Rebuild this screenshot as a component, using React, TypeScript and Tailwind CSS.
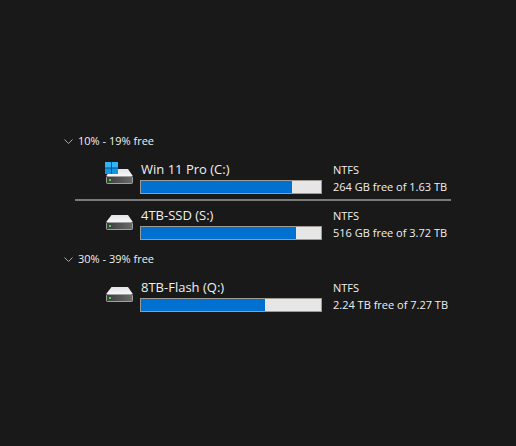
import React, { useState } from 'react';

interface Drive {
    name: string;
    system: string;
    space: string;
    used: number;
    isWindows?: boolean;
}

const groups: { title: string; drives: Drive[] }[] = [
    {
        title: '10% - 19% free',
        drives: [
            { name: 'Win 11 Pro (C:)', system: 'NTFS', space: '264 GB free of 1.63 TB', used: 84, isWindows: true },
            { name: '4TB-SSD (S:)', system: 'NTFS', space: '516 GB free of 3.72 TB', used: 86 },
        ],
    },
    {
        title: '30% - 39% free',
        drives: [
            { name: '8TB-Flash (Q:)', system: 'NTFS', space: '2.24 TB free of 7.27 TB', used: 69 },
        ],
    },
];

const DriveIcon: React.FC<{ isWindows?: boolean }> = ({ isWindows }) => (
    <svg className="h-6 w-7 shrink-0" viewBox="0 0 28 24" aria-hidden="true">
        <defs>
            <linearGradient id="drive-top" x1="0" y1="0" x2="0" y2="1">
                <stop offset="0" stopColor="#e4e4e8" />
                <stop offset="1" stopColor="#f6f6f8" />
            </linearGradient>
            <linearGradient id="drive-front" x1="0" y1="0" x2="1" y2="0">
                <stop offset="0" stopColor="#3c3c3c" />
                <stop offset="1" stopColor="#6b6b6b" />
            </linearGradient>
        </defs>
        <path d="M6.5 9h16.5l4.8 7h-26.6z" fill="url(#drive-top)" />
        <rect x="1.5" y="16.5" width="26" height="7" rx="0.8" fill="url(#drive-front)" stroke="#a0a0a0" />
        <rect x="4" y="19" width="2" height="2" fill="#3ddc3d" />
        {isWindows && (
            <g>
                <rect x="0" y="2" width="13" height="12" fill="#0b4f80" />
                <path d="M0 2h6v5.5h-6zM7 2h6v5.5h-6z" fill="#2fb4f5" />
                <path d="M0 8.5h6v5.5h-6zM7 8.5h6v5.5h-6z" fill="#1496e6" />
            </g>
        )}
    </svg>
);

const DriveRow: React.FC<{ drive: Drive }> = ({ drive }) => (
    <li className="flex pl-[41px]">
        <div className="mr-[7px] flex items-start pt-px">
            <DriveIcon isWindows={drive.isWindows} />
        </div>
        <div className="mr-[11px] min-w-0 flex-1">
            <h3 className="mb-px truncate pl-px text-[13px] leading-5">{drive.name}</h3>
            <div
                className="h-[14px] border border-[#a09a94] bg-[#e6e6e6]"
                role="meter"
                aria-label={drive.name}
                aria-valuemin={0}
                aria-valuemax={100}
                aria-valuenow={drive.used}
            >
                <div className="h-full bg-[#0070d1]" style={{ width: `${drive.used}%` }} />
            </div>
        </div>
        <div className="w-[119px] shrink-0 pt-[2px] pb-px text-[11px] leading-[17px] whitespace-nowrap">
            <p>{drive.system}</p>
            <p>{drive.space}</p>
        </div>
    </li>
);

const DriveGroup: React.FC<{ title: string; drives: Drive[] }> = ({ title, drives }) => {
    const [isOpen, setIsOpen] = useState(true);
    return (
        <section>
            <h2>
                <button
                    type="button"
                    className="flex items-center gap-[5px] text-[11px] leading-[18px]"
                    onClick={() => setIsOpen(!isOpen)}
                    aria-expanded={isOpen}
                >
                    <svg className={`h-[9px] w-[9px] ${isOpen ? '' : '-rotate-90'}`} viewBox="0 0 9 9" fill="none" stroke="#a8a8a8"><path d="M0.5 2.5l4 4 4-4" /></svg>
                    {title}
                </button>
            </h2>
            {isOpen && (
                <ul className="pt-[9px]">
                    {drives.map((drive, index) => (
                        <React.Fragment key={drive.name}>
                            {index > 0 && <li role="separator" className="mt-[3px] mr-px mb-[4px] ml-[11px] h-[2px] bg-[#7c7a78]" />}
                            <DriveRow drive={drive} />
                        </React.Fragment>
                    ))}
                </ul>
            )}
        </section>
    );
};

const App: React.FC = () => {
    return (
        <main className="flex min-h-screen items-center justify-center bg-[#191919] font-['Open_Sans','Noto_Sans',sans-serif] text-[#f0f0f0]">
            <div className="flex w-full max-w-[388px] flex-col gap-2">
                {groups.map((group) => (
                    <DriveGroup key={group.title} title={group.title} drives={group.drives} />
                ))}
            </div>
        </main>
    );
};

export default App;
